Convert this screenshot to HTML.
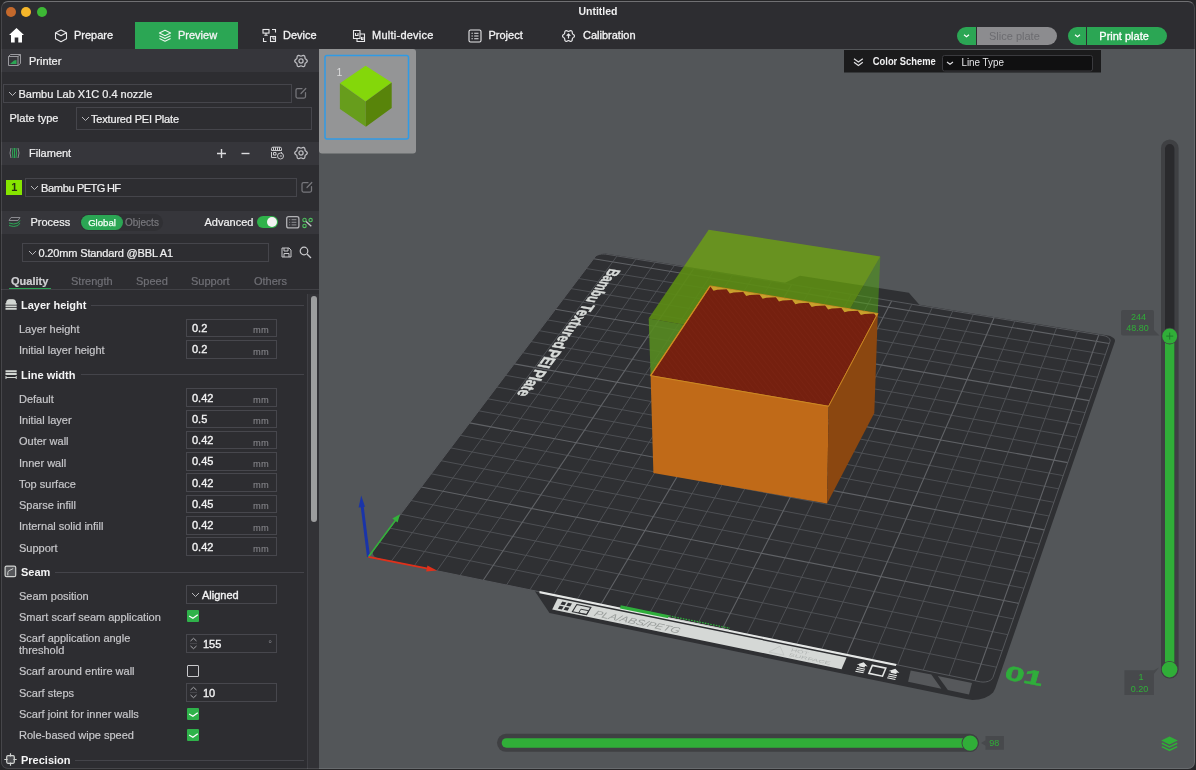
<!DOCTYPE html>
<html><head><meta charset="utf-8"><title>Untitled</title>
<style>
*{box-sizing:border-box;margin:0;padding:0}
html,body{width:1196px;height:770px;overflow:hidden;background:#262628}
body{font-family:"Liberation Sans",sans-serif;font-size:12px;color:#efeff0;position:relative}
.abs{position:absolute}
#win{position:absolute;left:1px;top:1px;width:1194px;height:768px;background:#2d2d31;overflow:hidden;border-radius:7px}
#win>.in{position:absolute;left:-1px;top:-1px;width:1196px;height:770px;will-change:transform}
#winborder{position:absolute;left:1px;top:1px;width:1194px;height:768px;border:1px solid rgba(255,255,255,0.12);border-top-color:rgba(255,255,255,0.32);border-radius:7px;pointer-events:none;z-index:50}
.tl{position:absolute;top:6.5px;width:10px;height:10px;border-radius:50%}
#title{position:absolute;left:0;top:5px;width:1196px;text-align:center;font-weight:bold;font-size:10.5px;color:#efeff0;letter-spacing:0}
.tab{position:absolute;top:22px;height:27px;line-height:27.4px;font-size:11px;color:#f4f4f5;white-space:nowrap;-webkit-text-stroke:0.3px #f4f4f5}
.tab svg{position:absolute}
#view{position:absolute;left:319px;top:49px;width:877px;height:721px;background:#535659;overflow:hidden}
#side{position:absolute;left:0;top:49px;width:319px;height:721px;background:#2d2d31;overflow:hidden}
.band{position:absolute;left:0;width:319px;background:#36363b}
.t{position:absolute;white-space:nowrap;line-height:14px;-webkit-text-stroke:0.22px}
.box{position:absolute;border:1px solid #45454b;background:#2d2d31}
.lbl{position:absolute;left:19px;font-size:11px;color:#c8c8cb;white-space:nowrap;line-height:13px;-webkit-text-stroke:0.18px}
.inp{position:absolute;left:186px;width:91px;height:19px;border:1px solid #47474d}
.inp b{position:absolute;left:5px;top:1.5px;font-size:11px;font-weight:normal;-webkit-text-stroke:0.35px #f4f4f5;color:#f4f4f5;line-height:15px}
.inp i{position:absolute;right:7.3px;top:4px;font-style:normal;font-size:9.4px;color:#8e8e93;line-height:13px}
.grp{position:absolute;left:21px;font-weight:bold;font-size:11px;color:#f4f4f5;white-space:nowrap;line-height:14px}
.gline{position:absolute;height:1px;background:#44444a}
.chk{position:absolute;left:187px;width:12px;height:12px;border-radius:1px}
.chk.on{background:#2fb24a}
.chk.off{border:1px solid #c9c9cc;background:#2d2d31}
</style></head><body>
<div id="win"><div class="in">
<!-- title bar -->
<div class="tl" style="left:6px;background:#c4692c"></div>
<div class="tl" style="left:21.4px;background:#f5b62a"></div>
<div class="tl" style="left:36.5px;background:#3db835"></div>
<div id="title">Untitled</div>
<!-- home -->
<svg class="abs" style="left:8px;top:27px" width="17" height="17" viewBox="0 0 17 17"><path d="M8.5 1 L16 8 L14 8 L14 15.5 L10.3 15.5 L10.3 10.5 L6.7 10.5 L6.7 15.5 L3 15.5 L3 8 L1 8 Z" fill="#ffffff"/></svg>
<!-- Prepare -->
<div class="tab" style="left:49px;width:86px"><svg style="left:5px;top:7px" width="14" height="14" viewBox="0 0 14 14" fill="none" stroke="#e8e8ea" stroke-width="1.1" stroke-linejoin="round"><path d="M7 1 L12.5 3.8 L12.5 9.8 L7 12.8 L1.5 9.8 L1.5 3.8 Z M1.5 3.8 L7 6.8 L12.5 3.8"/></svg><span class="abs" style="left:25px">Prepare</span></div>
<!-- Preview -->
<div class="tab" style="left:135px;width:103px;background:#2ba654"><svg style="left:23px;top:7px" width="14" height="14" viewBox="0 0 14 14" fill="none" stroke="#e9f5ec" stroke-width="1.1" stroke-linejoin="round"><path d="M7 1.2 L12.6 4 L7 6.8 L1.4 4 Z M1.4 6.7 L7 9.5 L12.6 6.7 M1.4 9.4 L7 12.2 L12.6 9.4"/></svg><span class="abs" style="left:43px">Preview</span></div>
<!-- Device -->
<div class="tab" style="left:238px;width:90px"><svg style="left:24px;top:6px" width="15" height="15" viewBox="0 0 15 15" fill="none" stroke="#e8e8ea" stroke-width="1.1"><rect x="1" y="1.5" width="6" height="3.6"/><path d="M4 5.1 V7 M2.3 7.2 H5.7"/><path d="M10 1.5 H13.5 V4.5 M1.5 10 V13.5 H4.5"/><rect x="8.5" y="8.5" width="5" height="5"/><path d="M10 10 H12 V12"/></svg><span class="abs" style="left:45px">Device</span></div>
<!-- Multi-device -->
<div class="tab" style="left:328px;width:120px"><svg style="left:24px;top:7px" width="14" height="14" viewBox="0 0 14 14" fill="none" stroke="#e8e8ea" stroke-width="1.1"><path d="M1.5 1.5 H8 V9.5 H1.5 Z M3.5 4 V6.5 H6 V4"/><path d="M8 5 H12.5 V12.5 H5 V9.5"/><path d="M9.5 8 V10.5 H11 V8"/></svg><span class="abs" style="left:44px;letter-spacing:0.25px">Multi-device</span></div>
<!-- Project -->
<div class="tab" style="left:448px;width:90px"><svg style="left:20px;top:7px" width="14" height="14" viewBox="0 0 14 14" fill="none" stroke="#e8e8ea" stroke-width="1.1"><rect x="1" y="1" width="12" height="12" rx="1.5"/><path d="M3.5 4.2 H4.8 M6.2 4.2 H10.5 M3.5 7 H4.8 M6.2 7 H10.5 M3.5 9.8 H4.8 M6.2 9.8 H10.5"/></svg><span class="abs" style="left:40.5px">Project</span></div>
<!-- Calibration -->
<div class="tab" style="left:538px;width:110px"><svg style="left:24px;top:6.5px" width="13" height="14" viewBox="0 0 13 14" fill="none" stroke="#e8e8ea" stroke-width="1.15" stroke-linejoin="round"><path d="M12.50 7.00 L12.25 7.76 L11.62 8.37 L10.94 8.84 L10.48 9.30 L10.31 9.93 L10.25 10.75 L10.03 11.60 L9.50 12.20 L8.72 12.35 L7.87 12.12 L7.13 11.76 L6.50 11.60 L5.87 11.76 L5.13 12.12 L4.28 12.35 L3.50 12.20 L2.97 11.60 L2.75 10.75 L2.69 9.93 L2.52 9.30 L2.06 8.84 L1.38 8.37 L0.75 7.76 L0.50 7.00 L0.75 6.24 L1.38 5.63 L2.06 5.16 L2.52 4.70 L2.69 4.07 L2.75 3.25 L2.97 2.40 L3.50 1.80 L4.28 1.65 L5.13 1.88 L5.87 2.24 L6.50 2.40 L7.13 2.24 L7.87 1.88 L8.72 1.65 L9.50 1.80 L10.03 2.40 L10.25 3.25 L10.31 4.07 L10.48 4.70 L10.94 5.16 L11.62 5.63 L12.25 6.24 Z"/><path d="M6.500 9.600 V5.200 M4.700 6.800 L6.500 4.900 L8.300 6.800" stroke-width="1.200"/></svg><span class="abs" style="left:45px">Calibration</span></div>
<!-- Slice / Print -->
<div class="abs" style="left:957.3px;top:26.6px;width:18.7px;height:18.4px;background:#2ba654;border-radius:9px 0 0 9px"></div>
<svg class="abs" style="left:962.3px;top:33px" width="9" height="6" viewBox="0 0 9 6" fill="none" stroke="#fff" stroke-width="1.1"><path d="M2 1.8 L4.5 3.8 L7 1.8"/></svg>
<div class="abs" style="left:977px;top:26.6px;width:80px;height:18.4px;background:#8c8c8f;border-radius:0 9px 9px 0;color:#6c6c70;font-size:11px;line-height:18px;padding-left:12px">Slice plate</div>
<div class="abs" style="left:1068.2px;top:26.6px;width:18px;height:18.4px;background:#2ba654;border-radius:9px 0 0 9px"></div>
<svg class="abs" style="left:1072.7px;top:33px" width="9" height="6" viewBox="0 0 9 6" fill="none" stroke="#fff" stroke-width="1.1"><path d="M2 1.8 L4.5 3.8 L7 1.8"/></svg>
<div class="abs" style="left:1087.3px;top:26.6px;width:79.7px;height:18.4px;background:#2ba654;border-radius:0 9px 9px 0;color:#fff;-webkit-text-stroke:0.3px #fff;font-size:11px;line-height:18px;padding-left:12px">Print plate</div>

<div class="abs" style="left:0;top:49px;width:319px;height:721px;background:#2d2d31"></div>
<div class="abs" style="left:307px;top:294px;width:12px;height:476px;background:#323236;border-left:1.5px solid #404045"></div>
<div class="band" style="top:49px;height:23px"></div>
<svg class="abs" style="left:8px;top:54px" width="13" height="12" viewBox="0 0 13 12" fill="none" stroke="#9a9a9f" stroke-width="1"><path d="M0.5 2.5 H10 V11.5 H0.5 Z M0.5 2.5 L2.5 0.5 H12.5 V9.5 L10 11.5 M10 2.5 L12.5 0.5"/><path d="M2 10 L6 6.5 L8.5 6 V10 Z" fill="#2ba654" stroke="none"/></svg>
<div class="t" style="left:29px;top:54px;font-size:11px;color:#f0f0f1">Printer</div>
<svg class="abs" style="left:294.3px;top:53.5px" width="14" height="14" viewBox="0 0 14 14" fill="none" stroke="#bdbdc1" stroke-width="1.25" stroke-linejoin="round"><path d="M13.30 7.00 L13.03 7.79 L12.36 8.44 L11.64 8.92 L11.16 9.40 L10.98 10.06 L10.92 10.92 L10.70 11.82 L10.15 12.46 L9.33 12.62 L8.44 12.36 L7.66 11.98 L7.00 11.80 L6.34 11.98 L5.56 12.36 L4.67 12.62 L3.85 12.46 L3.30 11.82 L3.08 10.92 L3.02 10.06 L2.84 9.40 L2.36 8.92 L1.64 8.44 L0.97 7.79 L0.70 7.00 L0.97 6.21 L1.64 5.56 L2.36 5.08 L2.84 4.60 L3.02 3.94 L3.08 3.08 L3.30 2.18 L3.85 1.54 L4.67 1.38 L5.56 1.64 L6.34 2.02 L7.00 2.20 L7.66 2.02 L8.44 1.64 L9.33 1.38 L10.15 1.54 L10.70 2.18 L10.92 3.08 L10.98 3.94 L11.16 4.60 L11.64 5.08 L12.36 5.56 L13.03 6.21 Z"/><circle cx="7" cy="7" r="2.1"/></svg>
<div class="box" style="left:3px;top:84px;width:289px;height:19px"></div>
<svg class="abs" style="left:8px;top:91px" width="9" height="6" viewBox="0 0 9 6" fill="none" stroke="#b9b9bd" stroke-width="1"><path d="M1 1 L4.5 4.5 L8 1"/></svg>
<div class="t" style="left:18.5px;top:87px;font-size:11px;color:#f0f0f1">Bambu Lab X1C 0.4 nozzle</div>
<svg class="abs" style="left:294.8px;top:87.3px" width="12" height="12" viewBox="0 0 12 12" fill="none" stroke="#77777c" stroke-width="1.25" stroke-linecap="round"><path d="M7 1.5 H2.5 Q1 1.5 1 3 V9.5 Q1 11 2.5 11 H9 Q10.5 11 10.5 9.500 V5.500"/><path d="M6 6.500 L10.800 1.500"/></svg>
<div class="t" style="left:9.5px;top:111px;font-size:11px;color:#f0f0f1">Plate type</div>
<div class="box" style="left:76px;top:107px;width:235.5px;height:22.8px"></div>
<svg class="abs" style="left:81px;top:116px" width="9" height="6" viewBox="0 0 9 6" fill="none" stroke="#b9b9bd" stroke-width="1"><path d="M1 1 L4.5 4.5 L8 1"/></svg>
<div class="t" style="left:91px;top:112px;font-size:11px;letter-spacing:-0.18px;color:#f0f0f1">Textured PEI Plate</div>
<div class="band" style="top:142px;height:22.5px"></div>
<svg class="abs" style="left:8px;top:147px" width="13" height="12" viewBox="0 0 13 12" fill="none" stroke-width="1"><path d="M3 1 Q1 6 3 11 M10 1 Q12 6 10 11" stroke="#8a8a8f"/><path d="M5 1 Q4 6 5 11 M6.5 1 V11 M8 1 Q9 6 8 11" stroke="#2ba654"/></svg>
<div class="t" style="left:29px;top:146px;font-size:11px;color:#f0f0f1">Filament</div>
<svg class="abs" style="left:216px;top:148px" width="11" height="11" viewBox="0 0 11 11" stroke="#dcdcde" stroke-width="1.4"><path d="M5.500 1 V10 M1 5.500 H10"/></svg>
<svg class="abs" style="left:240px;top:148px" width="11" height="11" viewBox="0 0 11 11" stroke="#dcdcde" stroke-width="1.4"><path d="M1.500 5.500 H9.500"/></svg>
<svg class="abs" style="left:270px;top:146px" width="15" height="14" viewBox="0 0 15 14" fill="none" stroke="#c9c9cc" stroke-width="1"><path d="M1.500 4.500 V2.500 Q1.500 1.200 3 1.200 H10 Q11.500 1.200 11.500 2.500 V4.500 Z M3.500 1.200 V4.500 M5.500 1.200 V4.500 M7.500 1.200 V4.500 M9.500 1.200 V4.500"/><path d="M1.500 6 V11.500 H6.500 M11.500 6 V7"/><path d="M3.500 6.500 H6 V9 H3.500 Z"/><circle cx="10.500" cy="10" r="3"/><path d="M9.500 10 L11.500 9 V11 Z" fill="#c9c9cc" stroke="none"/></svg>
<svg class="abs" style="left:294.3px;top:146.2px" width="14" height="14" viewBox="0 0 14 14" fill="none" stroke="#bdbdc1" stroke-width="1.25" stroke-linejoin="round"><path d="M13.30 7.00 L13.03 7.79 L12.36 8.44 L11.64 8.92 L11.16 9.40 L10.98 10.06 L10.92 10.92 L10.70 11.82 L10.15 12.46 L9.33 12.62 L8.44 12.36 L7.66 11.98 L7.00 11.80 L6.34 11.98 L5.56 12.36 L4.67 12.62 L3.85 12.46 L3.30 11.82 L3.08 10.92 L3.02 10.06 L2.84 9.40 L2.36 8.92 L1.64 8.44 L0.97 7.79 L0.70 7.00 L0.97 6.21 L1.64 5.56 L2.36 5.08 L2.84 4.60 L3.02 3.94 L3.08 3.08 L3.30 2.18 L3.85 1.54 L4.67 1.38 L5.56 1.64 L6.34 2.02 L7.00 2.20 L7.66 2.02 L8.44 1.64 L9.33 1.38 L10.15 1.54 L10.70 2.18 L10.92 3.08 L10.98 3.94 L11.16 4.60 L11.64 5.08 L12.36 5.56 L13.03 6.21 Z"/><circle cx="7" cy="7" r="2.1"/></svg>
<div class="abs" style="left:6.3px;top:179.6px;width:15.8px;height:15.4px;background:#86e500;color:#26320f;font-size:11px;font-weight:bold;line-height:15.4px;text-align:center">1</div>
<div class="box" style="left:25px;top:178px;width:272px;height:19px"></div>
<svg class="abs" style="left:30px;top:185px" width="9" height="6" viewBox="0 0 9 6" fill="none" stroke="#b9b9bd" stroke-width="1"><path d="M1 1 L4.5 4.5 L8 1"/></svg>
<div class="t" style="left:41px;top:181px;font-size:11px;letter-spacing:-0.3px;color:#f0f0f1">Bambu <span style="letter-spacing:-0.62px">PETG HF</span></div>
<svg class="abs" style="left:301px;top:181px" width="12" height="12" viewBox="0 0 12 12" fill="none" stroke="#77777c" stroke-width="1.25" stroke-linecap="round"><path d="M7 1.5 H2.5 Q1 1.5 1 3 V9.5 Q1 11 2.5 11 H9 Q10.5 11 10.5 9.500 V5.500"/><path d="M6 6.500 L10.800 1.500"/></svg>
<div class="band" style="top:211px;height:23px"></div>
<svg class="abs" style="left:8px;top:216px" width="13" height="13" viewBox="0 0 13 13" fill="none" stroke-width="1" stroke-linejoin="round"><path d="M3 1.500 H12 L10 4.500 H1 Z" stroke="#8a8a8f"/><path d="M1 7 Q6 9 10 7 L12 4.500 M1 9.500 Q6 11.500 10 9.500 L12 7" stroke="#2ba654"/></svg>
<div class="t" style="left:30.5px;top:215.3px;font-size:11px;color:#f0f0f1">Process</div>
<div class="abs" style="left:80px;top:214px;width:83px;height:17px;border-radius:9px;background:#303034"></div>
<div class="abs" style="left:81px;top:215px;width:42px;height:15px;border-radius:8px;background:#2ba654;color:#f4fff6;font-size:9.6px;-webkit-text-stroke:0.25px #f4fff6;line-height:15px;text-align:center">Global</div>
<div class="t" style="left:125px;top:216px;font-size:10px;color:#77777c">Objects</div>
<div class="t" style="left:204.5px;top:215.3px;font-size:11px;color:#f0f0f1">Advanced</div>
<div class="abs" style="left:257px;top:216px;width:21px;height:12px;border-radius:6px;background:#2fb24a"></div>
<div class="abs" style="left:267px;top:217px;width:10px;height:10px;border-radius:5px;background:#f2f2f2"></div>
<svg class="abs" style="left:285px;top:215px" width="16" height="15" viewBox="0 0 16 15" fill="none" stroke="#b2b2b6" stroke-width="1.3"><rect x="1.7" y="1.700" width="12.2" height="11.2" rx="2"/><path d="M4.200 4.700 H5.200 M6.600 4.700 H11.400 M4.200 7.300 H5.200 M6.600 7.300 H11.400 M4.200 9.900 H5.200 M6.600 9.900 H11.400" stroke="#8e8e93" stroke-width="1"/></svg>
<svg class="abs" style="left:301px;top:216px" width="14" height="13" viewBox="0 0 14 13" fill="none" stroke-width="1.100"><path d="M4.800 5.200 L10.300 10.300" stroke="#c4c4c8" stroke-width="1.400"/><circle cx="3.500" cy="4" r="1.700" stroke="#4fbf5f"/><circle cx="9.600" cy="4.100" r="1.700" stroke="#4fbf5f"/><circle cx="3.500" cy="9.900" r="1.700" stroke="#4fbf5f"/></svg>
<div class="box" style="left:22px;top:243px;width:247px;height:18.5px"></div>
<svg class="abs" style="left:28px;top:249.5px" width="9" height="6" viewBox="0 0 9 6" fill="none" stroke="#b9b9bd" stroke-width="1"><path d="M1 1 L4.5 4.5 L8 1"/></svg>
<div class="t" style="left:38.500px;top:245.5px;font-size:11px;letter-spacing:-0.15px;color:#f0f0f1">0.20mm Standard @BBL A1</div>
<svg class="abs" style="left:281px;top:247px" width="11" height="11" viewBox="0 0 11 11" fill="none" stroke="#c9c9cc" stroke-width="1"><path d="M1 1 H8 L10 3 V10 H1 Z M3 1 V4 H7 V1 M3 10 V6.500 H8 V10"/></svg>
<svg class="abs" style="left:299px;top:246px" width="13" height="13" viewBox="0 0 13 13" fill="none" stroke="#c9c9cc" stroke-width="1.200"><circle cx="5" cy="5" r="3.800"/><path d="M8 8 L12 12"/></svg>
<div class="t" style="left:11px;top:274px;font-size:11px;font-weight:bold;color:#cfcfd2">Quality</div>
<div class="t" style="left:71px;top:274px;font-size:11px;color:#6f6f75">Strength</div>
<div class="t" style="left:136px;top:274px;font-size:11px;color:#6f6f75">Speed</div>
<div class="t" style="left:191px;top:274px;font-size:11px;color:#6f6f75">Support</div>
<div class="t" style="left:254px;top:274px;font-size:11px;color:#6f6f75">Others</div>
<div class="abs" style="left:0;top:289px;width:319px;height:1px;background:#414146"></div>
<div class="abs" style="left:9px;top:288px;width:42px;height:1.2px;background:#2ba654"></div>
<div class="abs" style="left:310.6px;top:296px;width:6.3px;height:225.5px;border-radius:3.3px;background:#9c9d9e"></div>
<div class="gline" style="top:305.2px;left:91px;width:213px"></div>
<div class="grp" style="top:298.2px">Layer height</div>
<svg class="abs" style="left:4.8px;top:298.4px;margin-top:0.8px" width="12.2" height="11.2" viewBox="0 0 13 12" fill="none" stroke="#d2d6d2" stroke-width="1.2"><path d="M1.800 4.200 Q1.800 0.900 4.500 0.900 H8.500 Q11.200 0.900 11.200 4.200 Z" fill="#d2d6d2"/><path d="M0.500 5.200 H12.500 M0.500 7.900 H12.500 M0.500 10.500 H12.500" stroke-width="1.900"/></svg>
<div class="lbl" style="top:322.9px">Layer height</div>
<div class="inp" style="top:318.6px;height:18.6px"><b style="top:1.3px">0.2</b><i style="top:3.8px">mm</i></div>
<div class="lbl" style="top:344.3px">Initial layer height</div>
<div class="inp" style="top:340.0px;height:18.6px"><b style="top:1.3px">0.2</b><i style="top:3.8px">mm</i></div>
<div class="gline" style="top:374.4px;left:81px;width:223px"></div>
<div class="grp" style="top:367.8px">Line width</div>
<svg class="abs" style="left:4.8px;top:368.0px;margin-top:0.8px" width="12.2" height="11.2" viewBox="0 0 13 12" fill="none" stroke="#d2d6d2" stroke-width="1.1"><path d="M0.500 2.400 H12.500 M0.500 5.400 H12.500" stroke-width="2"/><path d="M1 9 H12 M1 7.400 V10.600 M12 7.400 V10.600"/></svg>
<div class="lbl" style="top:392.7px">Default</div>
<div class="inp" style="top:388.4px;height:18.6px"><b style="top:1.3px">0.42</b><i style="top:3.8px">mm</i></div>
<div class="lbl" style="top:413.9px">Initial layer</div>
<div class="inp" style="top:409.6px;height:18.6px"><b style="top:1.3px">0.5</b><i style="top:3.8px">mm</i></div>
<div class="lbl" style="top:435.2px">Outer wall</div>
<div class="inp" style="top:430.9px;height:18.6px"><b style="top:1.3px">0.42</b><i style="top:3.8px">mm</i></div>
<div class="lbl" style="top:456.5px">Inner wall</div>
<div class="inp" style="top:452.2px;height:18.6px"><b style="top:1.3px">0.45</b><i style="top:3.8px">mm</i></div>
<div class="lbl" style="top:477.7px">Top surface</div>
<div class="inp" style="top:473.4px;height:18.6px"><b style="top:1.3px">0.42</b><i style="top:3.8px">mm</i></div>
<div class="lbl" style="top:499.0px">Sparse infill</div>
<div class="inp" style="top:494.7px;height:18.6px"><b style="top:1.3px">0.45</b><i style="top:3.8px">mm</i></div>
<div class="lbl" style="top:520.3px">Internal solid infill</div>
<div class="inp" style="top:516.0px;height:18.6px"><b style="top:1.3px">0.42</b><i style="top:3.8px">mm</i></div>
<div class="lbl" style="top:541.6px">Support</div>
<div class="inp" style="top:537.3px;height:18.6px"><b style="top:1.3px">0.42</b><i style="top:3.8px">mm</i></div>
<div class="gline" style="top:571.9px;left:55px;width:249px"></div>
<div class="grp" style="top:564.7px">Seam</div>
<svg class="abs" style="left:4px;top:564.9px" width="13" height="13" viewBox="0 0 13 13" fill="none" stroke="#d2d4d2" stroke-width="1.2"><rect x="1.100" y="1.100" width="10.600" height="10.600" rx="1.500" fill="#55565a"/><path d="M3.800 10.300 V7.600 Q3.800 6.200 5.200 5.600 L9.200 3.600" stroke-width="1"/></svg>
<div class="lbl" style="top:590px">Seam position</div>
<div class="inp" style="top:585px"><b style="left:15px">Aligned</b></div>
<svg class="abs" style="left:191px;top:592px" width="9" height="6" viewBox="0 0 9 6" fill="none" stroke="#b9b9bd" stroke-width="1"><path d="M1 1 L4.5 4.5 L8 1"/></svg>
<div class="lbl" style="top:611px">Smart scarf seam application</div>
<div class="chk on" style="top:610.3px"><svg width="12" height="12" viewBox="0 0 12 12" fill="none" stroke="#fff" stroke-width="1.300"><path d="M2.100 6 L5.900 8.300 L10.800 4.700"/></svg></div>
<div class="lbl" style="top:632px;line-height:12px">Scarf application angle<br>threshold</div>
<div class="inp" style="top:634px"><b style="left:16px">155</b><i style="right:4px;top:2px">°</i></div>
<svg class="abs" style="left:190px;top:637px" width="7" height="13" viewBox="0 0 7 13" fill="none" stroke="#a5a5aa" stroke-width="1"><path d="M0.500 4 L3.500 1.300 L6.500 4 M0.500 9 L3.500 11.700 L6.500 9"/><path d="M-1 6.500 H8" stroke="#4c4c52" stroke-width="0.800"/></svg>
<div class="lbl" style="top:665px">Scarf around entire wall</div>
<div class="chk off" style="top:665.4px"></div>
<div class="lbl" style="top:687px">Scarf steps</div>
<div class="inp" style="top:683px"><b style="left:16px">10</b></div>
<svg class="abs" style="left:190px;top:686px" width="7" height="13" viewBox="0 0 7 13" fill="none" stroke="#a5a5aa" stroke-width="1"><path d="M0.500 4 L3.500 1.300 L6.500 4 M0.500 9 L3.500 11.700 L6.500 9"/><path d="M-1 6.500 H8" stroke="#4c4c52" stroke-width="0.800"/></svg>
<div class="lbl" style="top:708px">Scarf joint for inner walls</div>
<div class="chk on" style="top:708px"><svg width="12" height="12" viewBox="0 0 12 12" fill="none" stroke="#fff" stroke-width="1.300"><path d="M2.100 6 L5.900 8.300 L10.800 4.700"/></svg></div>
<div class="lbl" style="top:729px">Role-based wipe speed</div>
<div class="chk on" style="top:729px"><svg width="12" height="12" viewBox="0 0 12 12" fill="none" stroke="#fff" stroke-width="1.300"><path d="M2.100 6 L5.900 8.300 L10.800 4.700"/></svg></div>
<div class="gline" style="top:760.2px;left:75px;width:229px"></div>
<div class="grp" style="top:753.2px">Precision</div>
<svg class="abs" style="left:4px;top:753.4px" width="13" height="13" viewBox="0 0 13 13" fill="none" stroke="#d2d4d2" stroke-width="1.200"><rect x="2.700" y="2.700" width="7.600" height="7.600" rx="1.200" fill="#4a4b4f"/><path d="M6.500 0.300 V3.600 M6.500 9.400 V12.700 M0.300 6.500 H3.600 M9.400 6.500 H12.700"/></svg>
<div id="view">
<svg class="abs" style="left:-319px;top:-49px" width="1196" height="770" viewBox="0 0 1196 770"><path d="M374.0,549.5 L373.0,551.5 L372.8,553.5 L373.4,555.3 L374.9,557.0 L377.1,558.3 L379.8,559.1 L534.6,590.7 L549.5,613.1 L966.2,699.1 L972.5,699.9 L978.8,699.5 L984.5,698.1 L989.4,695.6 L993.1,692.4 L995.2,688.6 L1114.9,341.4 L1115.0,340.2 L1114.5,339.0 L1113.5,337.9 L1111.9,336.9 L1110.1,336.1 L1107.9,335.6 L919.4,304.8 L908.9,292.8 L800.0,275.8 L785.0,282.8 L607.9,253.9 L605.3,253.6 L602.7,253.7 L600.1,254.2 L597.9,254.9 L596.1,256.0 L594.8,257.2 Z" fill="#2f3033"/>
<path d="M391.2,561.4 L617.0,256.0 M379.4,542.4 L996.5,667.2 M414.0,566.1 L636.0,259.1 M390.1,528.2 L1002.2,650.8 M436.9,570.8 L655.2,262.3 M400.7,514.2 L1007.8,634.7 M460.0,575.5 L674.4,265.4 M411.0,500.5 L1013.3,618.9 M506.5,585.0 L713.1,271.7 M431.2,473.8 L1024.0,588.2 M529.9,589.8 L732.6,274.9 M441.0,460.7 L1029.2,573.2 M553.5,594.6 L752.2,278.1 M450.7,447.9 L1034.4,558.5 M577.2,599.4 L771.8,281.3 M460.2,435.3 L1039.4,544.1 M625.0,609.2 L811.4,287.8 M478.8,410.8 L1049.2,516.0 M649.1,614.1 L831.3,291.1 M487.8,398.8 L1053.9,502.3 M673.3,619.1 L851.3,294.3 M496.8,387.0 L1058.6,488.8 M697.7,624.0 L871.4,297.6 M505.5,375.3 L1063.2,475.6 M746.9,634.1 L911.9,304.3 M522.7,352.7 L1072.2,449.8 M771.6,639.2 L932.3,307.6 M531.0,341.6 L1076.6,437.2 M796.6,644.2 L952.8,310.9 M539.3,330.7 L1080.9,424.8 M821.6,649.4 L973.3,314.3 M547.4,319.9 L1085.1,412.6 M872.2,659.7 L1014.8,321.1 M563.3,298.9 L1093.4,388.8 M897.7,664.9 L1035.6,324.5 M571.0,288.6 L1097.5,377.2 M923.3,670.1 L1056.6,327.9 M578.7,278.5 L1101.4,365.8 M949.1,675.4 L1077.6,331.4 M586.2,268.5 L1105.4,354.5" stroke="#4f5155" stroke-width="0.95" fill="none"/>
<path d="M483.2,580.2 L693.7,268.6 M421.2,487.0 L1018.7,603.4 M601.0,604.3 L791.6,284.6 M469.6,422.9 L1044.3,529.9 M722.2,629.1 L891.6,300.9 M514.2,363.9 L1067.8,462.6 M846.8,654.5 L994.0,317.7 M555.4,309.3 L1089.3,400.6 M975.1,680.7 L1098.8,334.8 M593.6,258.7 L1109.2,343.5" stroke="#606266" stroke-width="1.1" fill="none"/>
<path d="M372.9,551.0 L372.1,552.6 L371.9,554.1 L372.4,555.6 L373.6,556.9 L375.4,558.0 L377.6,558.7 L980.3,681.8 L983.0,682.1 L985.8,681.9 L988.3,681.3 L990.5,680.2 L992.1,678.8 L993.0,677.2 L1110.0,341.3 L1110.1,340.1 L1109.6,338.9 L1108.6,337.8 L1107.0,336.8 L1105.2,336.0 L1103.0,335.5 L605.6,254.1 L603.5,254.0 L601.4,254.0 L599.4,254.4 L597.6,255.0 L596.1,255.8 L595.1,256.8 Z" stroke="#56585c" stroke-width="1" fill="none"/><polygon points="539.5,591.1 896.6,664.1 895.8,666.0 539.5,593.2" fill="#e6e8e7" />
<polygon points="557.6,598.4 846.6,657.5 841.5,669.2 552.2,609.6" fill="#d5d8d6" />
<polygon points="562.3,601.6 566.3,602.4 564.5,605.3 560.4,604.5" fill="#2f3033" />
<polygon points="559.7,605.7 563.7,606.6 561.9,609.5 557.9,608.7" fill="#2f3033" />
<polygon points="568.0,602.7 572.0,603.6 570.2,606.5 566.2,605.7" fill="#2f3033" />
<polygon points="565.4,606.9 569.4,607.7 567.6,610.7 563.6,609.8" fill="#2f3033" />
<polygon points="576.8,604.5 590.9,607.4 586.6,614.6 572.4,611.7" fill="none" stroke="#2f3033" stroke-width="1.1"/>
<polygon points="580.9,609.2 588.8,610.8 586.6,614.6 578.6,612.9" fill="none" stroke="#2f3033" stroke-width="0.9"/>
<text transform="matrix(2.4279 0.4996 -0.8979 1.5790 593.14 615.75)" font-size="4.9" fill="#9a9e9c" font-family="Liberation Sans,sans-serif" font-style="italic" textLength="35.2" lengthAdjust="spacingAndGlyphs">PLA/ABS/PETG</text>
<text transform="matrix(2.5134 0.5158 -0.7581 1.6313 790.48 651.35)" font-size="2.5" fill="#b0b4b2" font-family="Liberation Sans,sans-serif" textLength="7" lengthAdjust="spacingAndGlyphs">HOT</text>
<text transform="matrix(2.5261 0.5199 -0.7525 1.6446 788.26 656.08)" font-size="2.5" fill="#b0b4b2" font-family="Liberation Sans,sans-serif" textLength="16.5" lengthAdjust="spacingAndGlyphs">SURFACE</text>
<polygon points="768.9,652.1 780.0,646.2 784.0,655.2" fill="none" stroke="#c0c4c2" stroke-width="0.8"/>
<polygon points="856.9,664.4 863.7,662.2 867.6,666.6 865.1,666.1 864.5,667.4 858.9,666.3 859.4,665.0" fill="#e4e6e5" /><polygon points="857.2,667.0 865.3,668.7 864.9,669.7 856.8,668.0" fill="#e4e6e5" /><polygon points="856.4,668.8 864.6,670.5 864.1,671.5 856.0,669.8" fill="#e4e6e5" /><polygon points="855.6,670.7 863.8,672.3 863.4,673.3 855.2,671.7" fill="#e4e6e5" />
<polygon points="888.6,670.9 895.3,668.7 899.4,673.1 896.8,672.6 896.2,674.0 890.6,672.8 891.1,671.5" fill="#e4e6e5" /><polygon points="888.9,673.5 897.1,675.2 896.7,676.2 888.5,674.5" fill="#e4e6e5" /><polygon points="888.2,675.4 896.4,677.1 896.0,678.1 887.7,676.4" fill="#e4e6e5" /><polygon points="887.4,677.2 895.6,678.9 895.2,679.9 887.0,678.2" fill="#e4e6e5" />
<polygon points="872.3,665.4 885.8,668.2 882.5,676.2 868.9,673.4" fill="none" stroke="#e4e6e5" stroke-width="1.6"/>
<polygon points="910.7,670.4 931.3,674.6 941.4,688.7 908.1,681.8" fill="#56585b" />
<polygon points="937.8,676.0 972.0,683.0 969.0,694.4 947.9,690.0" fill="#56585b" />
<path d="M620.4,606.9 L668.7,616.7" stroke="#2fae3b" stroke-width="3.2"/>
<path d="M669.1,615.9 L729.9,628.3" stroke="#2fae3b" stroke-width="1.3" stroke-dasharray="1.6 1.2"/>
<path d="M668.2,617.7 L729.0,630.1" stroke="#c9ccca" stroke-width="1" />
<text transform="matrix(-0.7478 1.0136 -1.9376 -0.3241 609.93 268.14)" font-size="8.3" fill="#d8dbd9" font-family="Liberation Sans,sans-serif" font-weight="bold" stroke="#d8dbd9" stroke-width="0.25" textLength="33.0" lengthAdjust="spacingAndGlyphs">Bambu</text>
<text transform="matrix(-0.7929 1.0747 -1.9882 -0.3431 583.73 303.67)" font-size="8.3" fill="#d8dbd9" font-family="Liberation Sans,sans-serif" font-weight="bold" stroke="#d8dbd9" stroke-width="0.25" textLength="40.7" lengthAdjust="spacingAndGlyphs">Textured</text>
<text transform="matrix(-0.8302 1.1252 -2.0287 -0.3588 550.40 348.84)" font-size="8.3" fill="#d8dbd9" font-family="Liberation Sans,sans-serif" font-weight="bold" stroke="#d8dbd9" stroke-width="0.25" textLength="16.1" lengthAdjust="spacingAndGlyphs">PEI</text>
<text transform="matrix(-0.8581 1.1631 -2.0583 -0.3706 535.60 368.89)" font-size="8.3" fill="#d8dbd9" font-family="Liberation Sans,sans-serif" font-weight="bold" stroke="#d8dbd9" stroke-width="0.25" textLength="22.5" lengthAdjust="spacingAndGlyphs">Plate</text>
<text transform="matrix(1.75 0.33 -0.28 1.0 1003.4 679.0)" font-size="19.5" font-weight="bold" fill="#2fae3b" stroke="#2fae3b" stroke-width="0.5" font-family="Liberation Sans,sans-serif">01</text>
<path d="M368.5,556.8 L362.0,505" stroke="#1a34a8" stroke-width="3"/>
<polygon points="361.2,495.5 358.6,507.6 365.0,506.8" fill="#1a34a8" />
<path d="M368.5,556.8 L396,519.5" stroke="#33b23a" stroke-width="1.5"/>
<polygon points="400.0,514.3 392.3,518.6 397.6,522.6" fill="#33b23a" />
<path d="M368.5,556.8 L428,568.7" stroke="#e0301a" stroke-width="1.8"/>
<polygon points="437.0,570.5 427.4,565.6 426.2,571.6" fill="#e0301a" />
<polygon points="648.7,318.6 826.7,349.2 828.6,406.3 650.6,375.7" fill="rgba(87,139,32,0.9)" />
<polygon points="880.3,256.4 826.7,349.2 828.6,406.3 877.8,313.5" fill="rgba(80,160,20,0.55)" />
<clipPath id="gtop"><polygon points="708.7,229.8 880.3,256.4 826.7,349.2 648.7,318.6" fill="#000" /></clipPath>
<polygon points="708.7,229.8 880.3,256.4 826.7,349.2 648.7,318.6" fill="rgba(106,153,26,0.9)" />
<path d="M374.0,549.5 L373.0,551.5 L372.8,553.5 L373.4,555.3 L374.9,557.0 L377.1,558.3 L379.8,559.1 L534.6,590.7 L549.5,613.1 L966.2,699.1 L972.5,699.9 L978.8,699.5 L984.5,698.1 L989.4,695.6 L993.1,692.4 L995.2,688.6 L1114.9,341.4 L1115.0,340.2 L1114.5,339.0 L1113.5,337.9 L1111.9,336.9 L1110.1,336.1 L1107.9,335.6 L919.4,304.8 L908.9,292.8 L800.0,275.8 L785.0,282.8 L607.9,253.9 L605.3,253.6 L602.7,253.7 L600.1,254.2 L597.9,254.9 L596.1,256.0 L594.8,257.2 Z" fill="rgba(40,90,0,0.2)" clip-path="url(#gtop)"/>
<pattern id="hatch" width="4.2" height="4.2" patternUnits="userSpaceOnUse" patternTransform="rotate(52)"><rect width="4.2" height="4.2" fill="#75200f"/><path d="M0 2.1 H4.2" stroke="#7a2412" stroke-width="0.7"/></pattern>
<polygon points="650.6,375.7 710.2,285.9 877.8,313.5 828.6,406.3" fill="url(#hatch)" stroke="#c8861e" stroke-width="0.9"/>
<polygon points="710.2,285.9 710.2,286.2 713.5,290.7 717.2,289.7 726.5,289.2 726.5,288.9 729.8,293.4 733.6,292.4 742.9,291.9 742.9,291.6 746.2,296.1 749.9,295.1 759.2,294.6 759.3,294.3 762.6,298.8 766.3,297.8 775.6,297.3 775.7,297.0 779.0,301.5 782.7,300.5 792.0,300.0 792.0,299.7 795.4,304.2 799.1,303.2 808.4,302.7 808.4,302.4 811.7,306.9 815.5,305.9 824.8,305.4 824.8,305.1 828.1,309.6 831.8,308.6 841.1,308.1 841.2,307.8 844.5,312.3 848.2,311.3 857.5,310.8 857.6,310.5 860.9,315.0 864.6,314.0 873.9,313.5 873.9,313.2 877.1,317.6 877.4,316.1 877.7,314.1 877.8,313.5" fill="#c9a02c" />
<path d="M650.6,375.7 L710.2,285.9" stroke="#d08a20" stroke-width="1.3"/>
<polygon points="650.6,375.7 828.6,406.3 827.1,503.4 653.4,472.9" fill="#c06a18" />
<polygon points="828.6,406.3 877.8,313.5 874.3,412.9 827.1,503.4" fill="#8b4710" />
<path d="M650.6,375.7 L828.6,406.3 L877.8,313.5" stroke="#cf8a24" stroke-width="0.9" fill="none"/></svg>
<svg class="abs" style="left:-319px;top:-49px" width="1196" height="770" viewBox="0 0 1196 770">
<path d="M319,49 H413 Q416,49 416,52 V150.500 Q416,153.500 413,153.500 H322 Q319,153.500 319,150.500 Z" fill="#929394"/>
<rect x="325" y="55.500" width="83.500" height="83.500" rx="2" fill="#949596" stroke="#2f9be6" stroke-width="1.500"/>
<polygon points="365.6,65.7 391.7,82.4 365.6,101.4 339.9,83.2" fill="#84d70a" />
<polygon points="339.9,83.2 365.6,101.4 365.9,126.8 339.9,108.9" fill="#679d1c" />
<polygon points="365.6,101.4 391.7,82.4 391.7,108.1 365.9,126.8" fill="#58840a" />
<text x="336.500" y="75.600" font-size="10.500" fill="#dcdcdc" font-family="Liberation Sans,sans-serif">1</text>
<rect x="844" y="50" width="257" height="22.500" fill="#1b1b1c"/>
<rect x="942.500" y="55.500" width="150" height="15.500" rx="2" fill="#101011" stroke="#3a3a3e" stroke-width="1"/>
<path d="M854,58.800 L858.400,62 L862.800,58.800 M854,62.300 L858.400,65.500 L862.800,62.300" stroke="#e2e2e4" stroke-width="1.200" fill="none"/>
<text x="872.800" y="64.900" font-size="10.200" font-weight="bold" fill="#f2f2f3" font-family="Liberation Sans,sans-serif" textLength="63" lengthAdjust="spacingAndGlyphs">Color Scheme</text>
<path d="M947,62 L950,64.300 L953,62" stroke="#e2e2e4" stroke-width="1.100" fill="none"/>
<text x="961.400" y="66.300" font-size="10.200" fill="#e6e6e8" font-family="Liberation Sans,sans-serif" textLength="42.600" lengthAdjust="spacingAndGlyphs">Line Type</text>
<rect x="1161" y="139.500" width="17.600" height="539" rx="8.800" fill="#3f4043"/>
<rect x="1165" y="144" width="9.400" height="530" rx="4.700" fill="#2a2a2d"/>
<rect x="1165" y="336" width="9.400" height="334" fill="#30ae38"/>
<circle cx="1169.700" cy="336.100" r="8.300" fill="#3f4043"/><circle cx="1169.700" cy="336.100" r="7.500" fill="#30ae38"/>
<path d="M1166.200,336.100 H1173.200 M1169.700,332.600 V339.600" stroke="#1f7a2a" stroke-width="1"/>
<circle cx="1169.600" cy="669.600" r="8.600" fill="#3f4043"/><circle cx="1169.600" cy="669.600" r="7.800" fill="#30ae38"/>
<path d="M1123,310 H1152 Q1154,310 1154,312 V330 L1159.500,335.600 H1123 Q1121,335.600 1121,333.600 V312 Q1121,310 1123,310 Z" fill="#47494c"/>
<text x="1138.600" y="319.700" font-size="9" fill="#30ae38" text-anchor="middle" font-family="Liberation Sans,sans-serif">244</text>
<text x="1137.500" y="331.400" font-size="9" fill="#30ae38" text-anchor="middle" font-family="Liberation Sans,sans-serif">48.80</text>
<path d="M1124.400,670.200 H1153.900 L1159,667.500 L1153.900,674 V694.900 H1124.400 Z" fill="#47494c"/>
<text x="1141" y="680.300" font-size="9" fill="#30ae38" text-anchor="middle" font-family="Liberation Sans,sans-serif">1</text>
<text x="1139.500" y="691.600" font-size="9" fill="#30ae38" text-anchor="middle" font-family="Liberation Sans,sans-serif">0.20</text>
<path d="M1169.500,736.500 L1177.800,740.500 L1169.500,744.500 L1161.200,740.500 Z" fill="#30ae38"/>
<path d="M1161.800,743.300 L1169.500,747 L1177.200,743.300 M1161.800,746.600 L1169.500,750.300 L1177.200,746.600" stroke="#30ae38" stroke-width="1.500" fill="none"/>
<rect x="497" y="733.800" width="482" height="18" rx="9" fill="#3f4043"/>
<rect x="501.700" y="738.200" width="470" height="9.500" rx="4.700" fill="#30ae38"/>
<circle cx="970.100" cy="743.100" r="8.600" fill="#3f4043"/><circle cx="970.100" cy="743.100" r="7.700" fill="#30ae38"/>
<path d="M985.500,736 H1003.900 V749.700 H985.500 V745.800 L981,743 L985.500,740.200 Z" fill="#47494c"/>
<text x="994.300" y="746.300" font-size="9" fill="#30ae38" text-anchor="middle" font-family="Liberation Sans,sans-serif">98</text>
</svg>
</div>
</div></div>
<div id="winborder"></div>
</body></html>
